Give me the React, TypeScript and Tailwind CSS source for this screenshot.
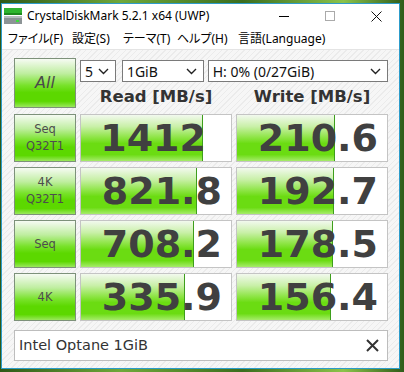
import React from 'react';

const BAR =
  'bg-[linear-gradient(to_bottom,#f2f9ee_0%,#c9f0a8_25%,#8fe548_48%,#6bdc12_62%,#6bdc12_86%,#a6ec6a_100%)]';
const BTN =
  'bg-[linear-gradient(to_bottom,#f6fbf3_0%,#bfeea0_30%,#78e22a_55%,#5cd800_70%,#5cd800_88%,#9ae85c_100%)]';

type Row = { label: string[]; read: string; readPct: number; write: string; writePct: number };

const rows: Row[] = [
  { label: ['Seq', 'Q32T1'], read: '1412', readPct: 81.5, write: '210.6', writePct: 65 },
  { label: ['4K', 'Q32T1'], read: '821.8', readPct: 77, write: '192.7', writePct: 64.5 },
  { label: ['Seq'], read: '708.2', readPct: 75, write: '178.5', writePct: 64 },
  { label: ['4K'], read: '335.9', readPct: 69.5, write: '156.4', writePct: 62.5 },
];

const menu = [
  { t: 'ファイル(F)', w: 'w-[64px]' },
  { t: '設定(S)', w: 'w-[51px]' },
  { t: 'テーマ(T)', w: 'w-[54px]' },
  { t: 'ヘルプ(H)', w: 'w-[61px]' },
  { t: '言語(Language)', w: 'w-[100px]' },
];

function Chevron() {
  return (
    <svg width="11" height="7" viewBox="0 0 11 7" className="shrink-0">
      <polyline points="1,1 5.5,5.5 10,1" fill="none" stroke="#222" strokeWidth="1.4" />
    </svg>
  );
}

function Select({ value, className }: { value: string; className: string }) {
  return (
    <div
      className={`flex h-[22px] items-center justify-between border border-[#7a7a7a] bg-white pl-[4px] pr-[6px] text-[14px] text-[#111] ${className}`}
    >
      <span>{value}</span>
      <Chevron />
    </div>
  );
}

function Value({ value, pct }: { value: string; pct: number }) {
  // whole numbers sit further left, as the decimal slot is left empty
  const pad = value.includes('.') ? 'pr-[9px]' : 'pr-[25px]';
  return (
    <div className="relative h-[48px] overflow-hidden border border-[#c4c4c4] bg-white">
      <div
        className={`absolute inset-y-0 left-0 border-r border-[#3e9e1c] ${BAR}`}
        style={{ width: `${pct}%` }}
      />
      <div
        className={`relative flex h-full items-center justify-end ${pad} font-['DejaVu_Sans',sans-serif] text-[38px] font-bold leading-none text-[#404040]`}
      >
        {value}
      </div>
    </div>
  );
}

function DriveIcon() {
  return (
    <svg width="18" height="16" viewBox="0 0 18 16">
      <rect x="0" y="0" width="18" height="5" fill="#2fb52f" />
      <rect x="0" y="5" width="18" height="2" fill="#1e8a1e" />
      <rect x="0" y="8" width="18" height="8" fill="#8c9496" />
      <rect x="0" y="8" width="18" height="2" fill="#b5bcbe" />
      <rect x="12" y="12" width="3" height="2" fill="#3adf3a" />
    </svg>
  );
}

export default function App() {
  return (
    <div className="h-[372px] w-[404px] bg-[linear-gradient(90deg,#2e5a18,#6fa83a_30%,#3b6e1e_60%,#8bc34a_85%,#2f5c1a)] pb-[3px] pl-[1px] pr-[4px] pt-[3px]">
      <div className="flex h-full flex-col border border-[#2d9cca] bg-white font-['Noto_Sans','Noto_Sans_CJK_JP',sans-serif]">
        {/* title bar */}
        <div className="flex h-[24px] shrink-0 items-center pl-[2px] text-[12px] text-black">
          <DriveIcon />
          <span className="ml-[5px]">CrystalDiskMark 5.2.1 x64 (UWP)</span>
          <div className="ml-auto flex items-center">
            <div className="flex w-[46px] justify-center">
              <div className="h-px w-[10px] bg-black" />
            </div>
            <div className="flex w-[46px] justify-center">
              <div className="h-[10px] w-[10px] border border-[#aaa]" />
            </div>
            <div className="flex w-[46px] justify-center">
              <svg width="11" height="11" viewBox="0 0 11 11">
                <path d="M0.5 0.5 L10.5 10.5 M10.5 0.5 L0.5 10.5" stroke="#111" strokeWidth="1" />
              </svg>
            </div>
          </div>
        </div>

        {/* menu */}
        <div className="flex h-[21px] shrink-0 items-center pl-[6px] text-[12px] text-black [font-feature-settings:'palt']">
          {menu.map((m) => (
            <span key={m.t} className={`${m.w} shrink-0 whitespace-nowrap`}>
              {m.t}
            </span>
          ))}
        </div>

        {/* content */}
        <div className="flex-1 border-t border-[#e4e4e4] bg-[repeating-linear-gradient(135deg,#f6f6f6_0px,#f6f6f6_3px,#ebebeb_3px,#ebebeb_4px)] pl-[12px] pt-[8px]">
          <div className="grid w-[374px] grid-cols-[62px_152px_152px] gap-x-[4px]">
            <div
              className={`flex h-[50px] items-center justify-center border border-[#7d917a] ${BTN} font-['DejaVu_Sans',sans-serif] text-[16px] italic text-[#4a4a4a]`}
            >
              All
            </div>
            <div className="col-span-2 flex flex-col">
              <div className="mt-[2px] flex">
                <Select value="5" className="w-[36px]" />
                <Select value="1GiB" className="ml-[6px] w-[82px]" />
                <Select value="H: 0% (0/27GiB)" className="ml-[4px] w-[181px]" />
              </div>
              <div className="mt-[4px] grid flex-1 grid-cols-2 gap-x-[4px] font-['DejaVu_Sans',sans-serif] text-[16.5px] font-bold leading-none text-[#333]">
                <div className="flex items-center justify-center">Read [MB/s]</div>
                <div className="flex items-center justify-center">Write [MB/s]</div>
              </div>
            </div>

            {rows.map((r, i) => (
              <React.Fragment key={i}>
                <div
                  className={`flex h-[48px] flex-col items-center justify-center border border-[#7d917a] ${BTN} font-['DejaVu_Sans',sans-serif] text-[11.5px] leading-[17px] text-[#4d4d4d] ${i === 0 ? 'mt-[6px]' : 'mt-[5px]'}`}
                >
                  {r.label.map((l) => (
                    <span key={l}>{l}</span>
                  ))}
                </div>
                <div className={i === 0 ? 'mt-[6px]' : 'mt-[5px]'}>
                  <Value value={r.read} pct={r.readPct} />
                </div>
                <div className={i === 0 ? 'mt-[6px]' : 'mt-[5px]'}>
                  <Value value={r.write} pct={r.writePct} />
                </div>
              </React.Fragment>
            ))}

            <div className="col-span-3 mt-[9px] flex h-[31px] items-center justify-between border border-[#bdbdbd] bg-white pl-[4px] pr-[8px] font-['DejaVu_Sans',sans-serif] text-[14.5px] text-[#333]">
              <span>Intel Optane 1GiB</span>
              <svg width="13" height="13" viewBox="0 0 13 13">
                <path d="M1 1 L12 12 M12 1 L1 12" stroke="#333" strokeWidth="2" />
              </svg>
            </div>
          </div>
        </div>
      </div>
    </div>
  );
}
